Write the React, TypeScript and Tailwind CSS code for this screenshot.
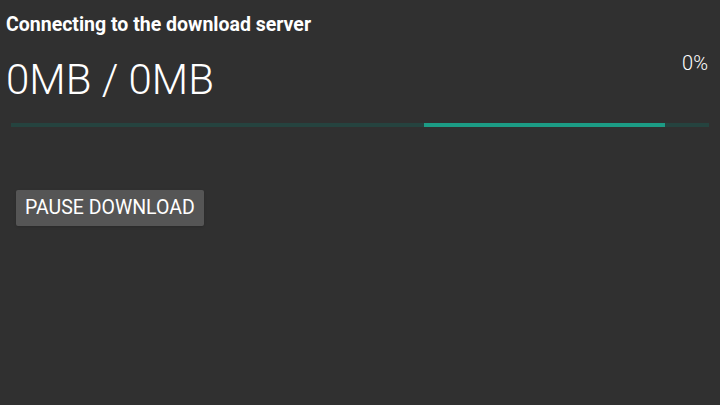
import React from 'react';

const App: React.FC = () => {
  return (
    <div className="w-[720px] h-[405px] bg-[#303030] text-white font-['Roboto',sans-serif] overflow-hidden">
      {/* Status */}
      <div className="pl-[6px] pt-[14px] text-[19.5px] font-bold leading-[22px]">
        Connecting to the download server
      </div>

      {/* Size and percent */}
      <div className="flex justify-between pl-[6px] pr-[12px] mt-[20px]">
        <div className="text-[42px] font-light leading-[48px]">0MB / 0MB</div>
        <div className="text-[20px] font-light leading-[22px] -mt-[4px]">0%</div>
      </div>

      {/* Progress */}
      <div className="mx-[11px] mt-[19px] h-[4px] bg-[#25433f] flex">
        <div className="w-[413px]" />
        <div className="w-[241px] bg-[#1c9c85]" />
      </div>

      {/* Button */}
      <div className="pl-[16px] pt-[63px]">
        <button className="h-[36px] px-[9px] bg-[#555555] rounded-[2px] text-[19.5px] text-white leading-[36px] shadow-sm">
          PAUSE DOWNLOAD
        </button>
      </div>
    </div>
  );
};

export default App;
